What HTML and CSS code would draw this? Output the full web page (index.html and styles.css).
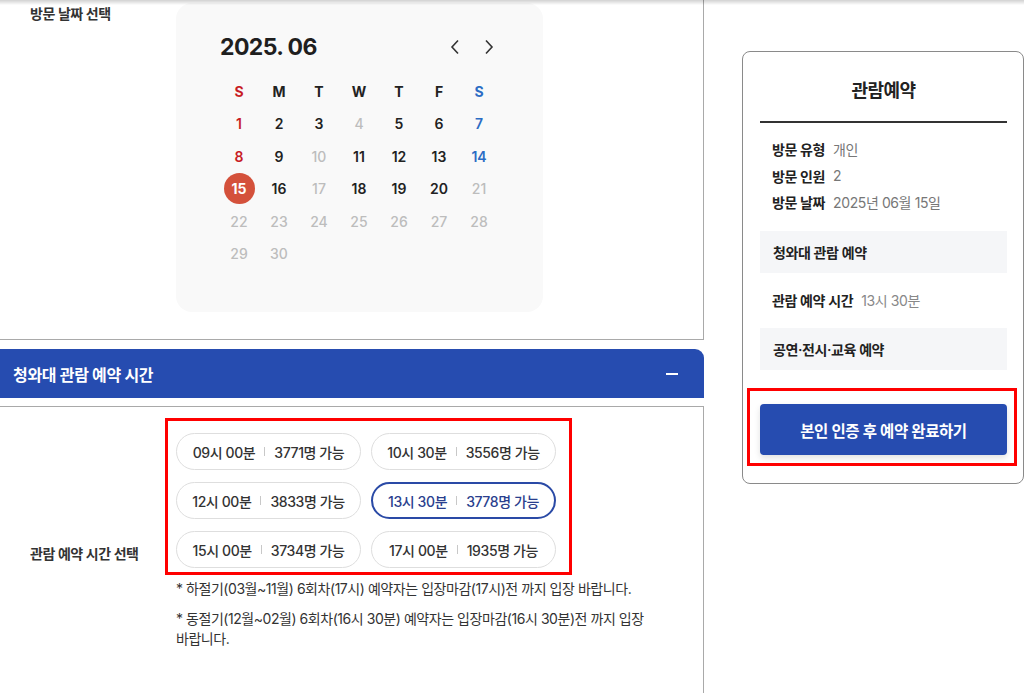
FILE: index.html
```html
<!DOCTYPE html>
<html lang="ko">
<head>
<meta charset="utf-8">
<title>관람예약</title>
<link rel="stylesheet" href="styles.css">
</head>
<body>
<div class="topshade"></div>
<div class="page">
  <div class="main">
    <section class="box date-box">
      <div class="field-label top">방문 날짜 선택</div>
      <div class="calendar">
        <div class="cal-head">
          <div class="cal-title">2025. 06</div>
          <div class="cal-nav">
            <svg width="12" height="16" viewBox="0 0 12 16"><path d="M9 1.5 L3 8 L9 14.5" fill="none" stroke="#333" stroke-width="1.6"/></svg>
            <svg width="12" height="16" viewBox="0 0 12 16"><path d="M3 1.5 L9 8 L3 14.5" fill="none" stroke="#333" stroke-width="1.6"/></svg>
          </div>
        </div>
        <div class="cal-grid">
          <span class="dow sun">S</span><span class="dow">M</span><span class="dow">T</span><span class="dow">W</span><span class="dow">T</span><span class="dow">F</span><span class="dow sat">S</span>
          <span class="d sun">1</span><span class="d">2</span><span class="d">3</span><span class="d off">4</span><span class="d">5</span><span class="d">6</span><span class="d sat">7</span>
          <span class="d sun">8</span><span class="d">9</span><span class="d off">10</span><span class="d">11</span><span class="d">12</span><span class="d">13</span><span class="d sat">14</span>
          <span class="d sel"><b>15</b></span><span class="d">16</span><span class="d off">17</span><span class="d">18</span><span class="d">19</span><span class="d">20</span><span class="d off">21</span>
          <span class="d off">22</span><span class="d off">23</span><span class="d off">24</span><span class="d off">25</span><span class="d off">26</span><span class="d off">27</span><span class="d off">28</span>
          <span class="d off">29</span><span class="d off">30</span>
        </div>
      </div>
    </section>

    <div class="acc-bar">
      <span class="acc-title">청와대 관람 예약 시간</span>
      <span class="minus"></span>
    </div>

    <section class="box time-box">
      <div class="field-label mid">관람 예약 시간 선택</div>
      <div class="time-col">
        <div class="mark slots">
          <div class="slot"><span>09시 00분</span><i></i><span>3771명 가능</span></div>
          <div class="slot"><span>10시 30분</span><i></i><span>3556명 가능</span></div>
          <div class="slot"><span>12시 00분</span><i></i><span>3833명 가능</span></div>
          <div class="slot on"><span>13시 30분</span><i></i><span>3778명 가능</span></div>
          <div class="slot"><span>15시 00분</span><i></i><span>3734명 가능</span></div>
          <div class="slot"><span>17시 00분</span><i></i><span>1935명 가능</span></div>
        </div>
        <p class="note">* 하절기(03월~11월) 6회차(17시) 예약자는 입장마감(17시)전 까지 입장 바랍니다.</p>
        <p class="note">* 동절기(12월~02월) 6회차(16시 30분) 예약자는 입장마감(16시 30분)전 까지 입장 바랍니다.</p>
      </div>
    </section>
  </div>

  <aside class="summary">
    <h2 class="sum-title">관람예약</h2>
    <dl class="info">
      <div class="row"><dt>방문 유형</dt><dd>개인</dd></div>
      <div class="row"><dt>방문 인원</dt><dd>2</dd></div>
      <div class="row"><dt>방문 날짜</dt><dd>2025년 06월 15일</dd></div>
    </dl>
    <div class="graybox">청와대 관람 예약</div>
    <div class="row single"><span class="k">관람 예약 시간</span><span class="v">13시 30분</span></div>
    <div class="graybox">공연·전시·교육 예약</div>
    <div class="mark btn-wrap">
      <button class="submit">본인 인증 후 예약 완료하기</button>
    </div>
  </aside>
</div>
</body>
</html>
```

FILE: styles.css
```css
* { box-sizing: border-box; }
html, body { margin: 0; padding: 0; background: #fff; }
body {
  font-family: "Inter", "Noto Sans CJK KR", sans-serif;
  color: #222;
  width: 1024px;
  height: 693px;
  overflow: hidden;
}
.topshade {
  position: fixed;
  top: 0; left: 0; right: 0;
  height: 5px;
  background: linear-gradient(to bottom, rgba(0,0,0,0.18), rgba(0,0,0,0));
  z-index: 5;
}
.page {
  display: flex;
  gap: 38px;
}
.main { width: 704px; flex: none; }

.box {
  border-right: 1px solid #a9a9a9;
}
.date-box {
  height: 340px;
  border-bottom: 1px solid #a9a9a9;
  display: flex;
}
.field-label {
  width: 176px;
  flex: none;
  padding-left: 30px;
  font-size: 14px;
  font-weight: 700;
  color: #333;
  letter-spacing: -0.4px;
  line-height: 18px;
}
.field-label.top { padding-top: 5px; }

.calendar {
  margin-top: 3px;
  width: 367px;
  height: 309px;
  background: #f9f9f9;
  border-radius: 16px;
  padding: 28px 44px 0 44px;
}
.cal-head {
  display: flex;
  justify-content: space-between;
  align-items: center;
  height: 32px;
}
.cal-title {
  font-size: 23px;
  font-weight: 700;
  letter-spacing: -0.6px;
  color: #1f1f1f;
}
.cal-nav {
  display: flex;
  gap: 22px;
  padding-right: 4px;
}
.cal-nav svg { display: block; }
.cal-grid {
  margin-top: 12px;
  display: grid;
  grid-template-columns: repeat(7, 40px);
  grid-auto-rows: 32.5px;
  margin-left: -1px;
}
.cal-grid span {
  display: flex;
  align-items: center;
  justify-content: center;
  font-size: 14px;
  font-weight: 600;
  color: #222;
}
.cal-grid .dow { font-weight: 700; }
.cal-grid .sun { color: #c81d25; }
.cal-grid .sat { color: #2b6cc4; }
.cal-grid .off { color: #bdbdbd; font-weight: 500; }
.cal-grid .sel b {
  width: 31px; height: 31px;
  border-radius: 50%;
  background: #d4513b;
  color: #fff;
  display: flex;
  align-items: center;
  justify-content: center;
  font-weight: 700;
}

.acc-bar {
  margin-top: 9px;
  height: 49px;
  background: #264cb0;
  border-top-right-radius: 9px;
  display: flex;
  align-items: center;
  justify-content: space-between;
  padding: 0 26px 0 13px;
  color: #fff;
}
.acc-title {
  font-size: 16px;
  font-weight: 700;
  letter-spacing: -0.3px;
}
.minus {
  width: 12px;
  height: 2px;
  background: #fff;
}

.time-box {
  margin-top: 8px;
  border-top: 1px solid #a9a9a9;
  min-height: 294px;
  display: flex;
  padding-top: 11px;
}
.field-label.mid {
  width: 165px;
  align-self: center;
  margin-top: -11px;
}
.time-col { width: 500px; }
.mark {
  border: 3px solid #f00;
}
.slots {
  width: 407px;
  padding: 12px 12px 4px 8px;
  display: grid;
  grid-template-columns: 185px 185px;
  column-gap: 10px;
  row-gap: 12px;
}
.slot {
  height: 37px;
  border: 1px solid #dedede;
  border-radius: 19px;
  background: #fff;
  display: flex;
  align-items: center;
  justify-content: center;
  font-size: 14px;
  font-weight: 500;
  color: #333;
  letter-spacing: -0.4px;
}
.slot i {
  width: 1px;
  height: 9px;
  background: #c8c8c8;
  margin: 0 9px;
}
.slot.on {
  border: 2px solid #2a4aa6;
  color: #2a3f8e;
}
.note {
  margin: 4px 0 0 11px;
  width: 482px;
  font-size: 14px;
  line-height: 20px;
  color: #333;
  letter-spacing: -0.45px;
  word-break: keep-all;
}
.note + .note { margin-top: 10px; }

.summary {
  margin-top: 51px;
  width: 282px;
  height: 433px;
  border: 1px solid #8a8a8a;
  border-radius: 8px;
  padding: 0 16px 0 17px;
  flex: none;
}
.sum-title {
  margin: 0;
  padding: 25px 0 16px;
  text-align: center;
  font-size: 18px;
  line-height: 28px;
  font-weight: 700;
  color: #222;
  letter-spacing: -0.5px;
  border-bottom: 2px solid #333;
}
.info {
  margin: 13px 0 15px;
  padding-left: 12px;
}
.row {
  display: flex;
  align-items: center;
  height: 26.5px;
  font-size: 14px;
  letter-spacing: -0.4px;
}
.row dt, .row .k { font-weight: 600; color: #222; margin-right: 8px; }
.row dd { margin: 0; color: #777; }
.row .v { color: #888; }
.row.single { padding-left: 12px; margin: 14px 0 15px; }
.graybox {
  height: 42px;
  background: #f5f6f8;
  display: flex;
  align-items: center;
  padding-left: 13px;
  font-size: 14px;
  font-weight: 600;
  letter-spacing: -0.4px;
  color: #222;
}
.btn-wrap {
  margin: 18px -10px 0 -13px;
  padding: 13px 7px 8px 10px;
}
.submit {
  width: 100%;
  height: 51px;
  border: 0;
  border-radius: 4px;
  background: #264cb0;
  color: #fff;
  font-family: inherit;
  font-size: 15.5px;
  font-weight: 600;
  letter-spacing: -0.4px;
  box-shadow: 0 3px 6px rgba(0,0,0,0.12);
}
```
